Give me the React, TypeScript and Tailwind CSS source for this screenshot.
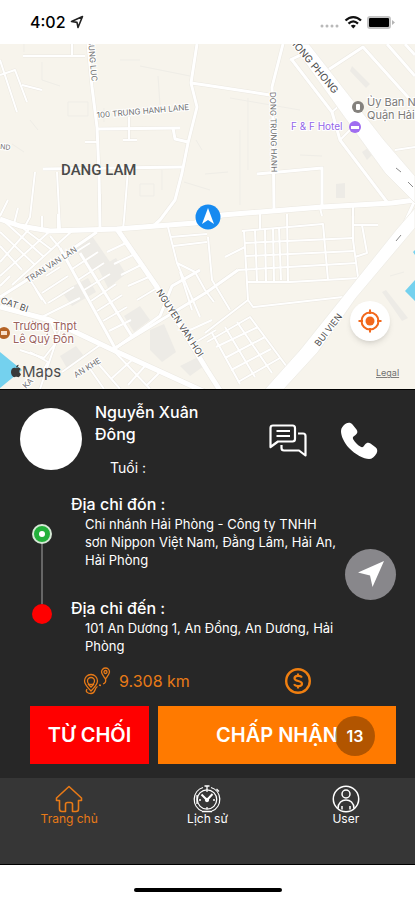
import { useState } from 'react'

const majorRoads = [
    'M0 219 L20 226 L50 231 L117 229 L195 223 L222 215 L322 207 L392 203 L415 200',
    'M117 229 L157 287 L207 370 L221 392',
    'M0 307 L50 320 L113 350 L205 392',
]

const roads = [
    'M88 44 L92 87 L97 127 L99 173 L100 229',
    'M197 44 L191 83 L197 107 L188 143 L182 173 L175 200 L160 220 L152 227',
    'M191 83 L205 85 L270 95',
    'M283 44 L272 87 L273 123 L274 210',
    'M292 60 L332 112 L340 140 L387 202',
    'M97 129 L180 128',
    'M173 128 L175 139 L188 142',
    'M43 169 L182 167',
    'M257 174 L322 168 L322 207',
    'M290 60 L305 53',
    'M328 70 L363 47 L415 105',
    'M387 44 L415 76',
    'M405 44 L415 55',
    'M415 200 L405 222',
    'M0 297 L27 280 L97 232',
    'M60 248 L115 348',
    'M80 253 L133 338',
    'M113 350 L160 316 L172 286 L200 270',
    'M115 348 L207 292 L238 270',
]

const lanes = [
    'M23 56 L85 56 M72 44 L72 56',
    'M0 60 L17 112 M0 75 L15 70 L27 102 M22 85 L42 90',
    'M129 117 L129 140 M123 140 L137 140 M85 142 L97 142',
    'M35 172 L30 217 L24 228 M57 172 L60 229 M128 170 L124 220 L123 229',
    'M0 216 L8 200 M14 224 L18 208 M42 229 L42 216',
    'M332 112 L340 105 M340 140 L350 130 M395 150 L415 147',
    'M353 205 L353 240 L358 277 M353 225 L378 225 M362 225 L367 253 L355 257',
    'M242 231 L323 224 L328 280 M244 231 L248 300 L253 307 L343 297',
    'M255 230 L257 281 M265 229 L266 281 M273 228 L274 281 M279 228 L281 280 M287 214 L288 282 M260 212 L260 229',
    'M245 243 L354 238 M246 256 L355 251 M238 270 L357 263 M247 282 L290 282 L360 278',
    'M225 257 L245 247 M208 237 L212 280 L230 310',
    'M205 333 L248 300 M207 342 L250 317 L287 367',
    'M212 333 L240 384 M225 327 L255 377 M237 322 L272 373',
    'M216 347 L258 327 M225 358 L265 337 M231 370 L271 349 M238 382 L280 358',
    'M168 227 L177 263 L200 317 M170 237 L207 234 M173 246 L207 242 M177 263 L195 272 L205 290 L214 302',
    'M180 272 L192 310 M190 330 L212 320 M196 342 L216 330',
    'M107 252 L128 242 M114 264 L135 254 M121 275 L143 264 M128 286 L151 276 M137 300 L157 288',
    'M66 258 L90 243 M72 269 L98 252 M78 280 L104 263 M84 290 L110 274 M91 301 L116 284 M97 311 L122 295 M103 321 L127 307 M109 331 L131 320',
    'M60 267 L46 276 M68 276 L42 293 M74 287 L48 303 M80 298 L40 318 M60 248 L50 236 M35 288 L42 300 M28 277 L46 304',
    'M0 246 L22 270 M0 232 L34 264 M5 222 L44 257 M20 226 L52 250 M0 262 L30 228 M0 276 L50 231 M12 285 L72 231 M0 286 L10 276',
    'M50 320 L58 340 L44 358 L20 350 M60 330 L40 389 M100 345 L62 372 M95 360 L120 389 M88 366 L104 389 M113 350 L150 389 M132 360 L112 378 M145 366 L128 385 M160 372 L146 386',
    'M30 352 L48 362 L40 376',
    'M100 194 L100 229 M58 214 L58 229 M320 208 L322 216 M353 205 L353 216',
]

const faintPaths = 'M42 62 L42 80 L60 86 M68 102 h20 v14 h-20 z M140 66 L190 76 M158 76 L160 105 M140 184 h14 v12 h-14 z M30 120 L38 130 M12 144 L24 152 M248 98 L248 170 M205 174 L228 172 M300 155 L322 156 M196 140 L202 150 M230 98 L300 110 M104 108 L104 122 M162 170 L162 190 M184 182 L210 190 M240 130 L240 205 M24 44 L24 52 M120 60 L140 60 M390 276 L404 272'

const buildings = [
    'M74 246 L92 236 L110 262 L92 272 Z',
    'M98 268 L116 258 L126 274 L108 288 Z',
    'M62 292 L88 278 L96 292 L72 306 Z',
    'M124 316 L140 306 L150 320 L134 332 Z',
    'M150 330 L164 324 L176 352 L162 362 L150 350 Z',
    'M60 356 L76 346 L84 356 L68 370 Z',
    'M180 366 L196 358 L204 366 L190 376 Z',
    'M336 184 L345 183 L345 198 L336 198 Z',
    'M362 152 L368 148 L373 154 L367 160 Z',
    'M352 66 L370 84 L366 88 L350 71 Z',
    'M382 292 L386 290 L408 318 L402 321 Z',
]

const Label = ({ x, y, rotate = 0, size = 9, fill = '#707070', children }: {
    x: number
    y: number
    rotate?: number
    size?: number
    fill?: string
    children: string
}) => (
    <text
        transform={`translate(${x} ${y}) rotate(${rotate})`}
        fontSize={size}
        fill={fill}
        stroke="#ffffff"
        strokeWidth="2"
        paintOrder="stroke"
    >
        {children}
    </text>
)

const RideMap = () => (
    <svg
        viewBox="0 44 415 345"
        preserveAspectRatio="xMidYMid slice"
        className="block h-[345px] w-full font-['Inter','Liberation_Sans',sans-serif]"
    >
        <rect x="-400" y="44" width="1215" height="345" fill="#f7f4ec" />
        <g fill="#edebe6">
            {buildings.map((d) => <path key={d} d={d} />)}
        </g>
        <path d={faintPaths} fill="none" stroke="#efede7" strokeWidth="1" />
        <path d="M0 352 L22 370 L0 388 Z M415 280 L405 291 L415 301 Z M415 250 l-2 2 l2 3 z" fill="#74d1ee" />
        <g fill="none" stroke="#ebe8e1" strokeLinejoin="round">
            {lanes.map((d) => <path key={d} d={d} strokeWidth="3" />)}
            {roads.map((d) => <path key={d} d={d} strokeWidth="4" />)}
            {majorRoads.map((d) => <path key={d} d={d} strokeWidth="6" />)}
        </g>
        <g fill="none" stroke="#ffffff" strokeLinejoin="round">
            {lanes.map((d) => <path key={d} d={d} strokeWidth="2" />)}
            {roads.map((d) => <path key={d} d={d} strokeWidth="3" />)}
            {majorRoads.map((d) => <path key={d} d={d} strokeWidth="5" />)}
        </g>
        <path d="M292 44 L309 44 L384 140 L415 176 L415 203 L385 173 L345 118 Z" fill="#ffffff" stroke="#f0eee8" />
        <path d="M415 208 L396 230 L340 300 L300 350 L265 389 L284 389 L318 352 L356 298 L415 228 Z" fill="#ffffff" stroke="#f0eee8" />
        <path d="M396 168 l5 4 M408 182 l5 5 M396 241 l5 -6" stroke="#8a8a8a" />

        <Label x={88} y={40} rotate={85} size={8}>BUNG LUC</Label>
        <Label x={97} y={118} rotate={-5} size={8}>100 TRUNG HANH LANE</Label>
        <Label x={270} y={92} rotate={89} size={8}>DONG TRUNG HANH</Label>
        <Label x={289} y={41} rotate={50} size={10} fill="#4d4d4d">HONG PHONG</Label>
        <Label x={0} y={149} rotate={5} size={7}>ND</Label>
        <Label x={28} y={283} rotate={-33} size={8}>TRAN VAN LAN</Label>
        <Label x={0} y={303} rotate={19} fill="#4d4d4d">CAT BI</Label>
        <Label x={156} y={292} rotate={57} fill="#4d4d4d">NGUYEN VAN HOI</Label>
        <Label x={319} y={347} rotate={-52} fill="#4d4d4d">BUI VIEN</Label>
        <Label x={76} y={378} rotate={-32} size={8}>AN KHE</Label>
        <Label x={26} y={389} rotate={-45} size={8}>KA</Label>
        <text x="61" y="175" fontSize="15" fontWeight="500" fill="#4a4a4a" className="font-['Roboto','Liberation_Sans',sans-serif]">DANG LAM</text>

        <Label x={291} y={130} size={10} fill="#9366e8">F &amp; F Hotel</Label>
        <circle cx="355" cy="127" r="6" fill="#a06df0" />
        <path d="M351 126 h8 v3 h-8 z" fill="#ffffff" />
        <Label x={367} y={106} size={11} fill="#7c7a77">Ủy Ban Nhân Dân</Label>
        <Label x={367} y={119} size={11} fill="#7c7a77">Quận Hải An</Label>
        <circle cx="358" cy="107" r="6" fill="#84817d" />
        <rect x="356" y="104" width="4" height="6" rx="1" fill="#ffffff" />
        <Label x={13} y={330} size={11} fill="#9b625c">Trường Thpt</Label>
        <Label x={13} y={343} size={11} fill="#9b625c">Lê Quý Đôn</Label>
        <circle cx="4" cy="333" r="6" fill="#b46325" />
        <path d="M1 331 h6 v4 h-6 z" fill="#f8dfc9" />

        <g transform="translate(11 365)" fill="#3a3a3a">
            <path d="M5 3.2 C7 1.9 9 2.7 9.7 4 C7.7 5.2 8 8 10 9 C9 11.6 7.8 12.5 6.6 12 C5.6 11.5 5 11.5 4 12 C2 12.8 0 9.6 0 7 C0 3.5 2.7 1.9 5 3.2 Z" />
            <path d="M5 2.6 C5 1 6.2 0 7.6 -.2 C7.6 1.4 6.6 2.6 5 2.6 Z" />
        </g>
        <text x="22" y="377" fontSize="15" fill="#4c4c4c">Maps</text>
        <text x="376" y="376" fontSize="9" fill="#707070" textDecoration="underline">Legal</text>

        <circle cx="208" cy="217" r="12.5" fill="#168af0" />
        <path d="M208 208 L214 224 L208 220 L202 224 Z" fill="#ffffff" />
    </svg>
)

const StatusBar = () => (
    <header className="flex h-11 items-center justify-between bg-white pl-[30px] pr-5 text-black">
        <div className="flex items-center gap-1">
            <span className="text-base font-medium">4:02</span>
            <svg viewBox="0 0 14 14" className="size-3.5">
                <path d="M1.5 6.5 L12.5 1.5 L8 12.5 L7 7.4 Z" fill="none" stroke="#222" strokeWidth="1.6" strokeLinejoin="round" />
            </svg>
        </div>
        <svg viewBox="0 0 76 16" className="h-4 w-[76px]">
            <g fill="#b9b9b9">
                <circle cx="3" cy="12" r="1.5" />
                <circle cx="8" cy="12" r="1.5" />
                <circle cx="13" cy="12" r="1.5" />
                <circle cx="18" cy="12" r="1.5" />
            </g>
            <g fill="none" stroke="#111" strokeWidth="2.2">
                <path d="M26.5 6.6 C31 2 37.5 2 42 6.6" />
                <path d="M29.5 9.6 C32.5 6.8 36 6.8 39 9.6" />
            </g>
            <path d="M31.8 11.8 C33.4 10.4 35.2 10.4 36.8 11.8 L34.3 14.4 Z" fill="#111" />
            <rect x="49" y="3" width="22" height="11" rx="2" fill="#fff" stroke="#c4c4c4" strokeWidth="2" />
            <rect x="50" y="4" width="20" height="9" rx="1" fill="#000" />
            <path d="M73 6 L76 8.5 L73 11 Z" fill="#b5b5b5" />
        </svg>
    </header>
)

const ChatIcon = () => (
    <svg viewBox="0 0 38 34" className="h-[34px] w-[38px]" fill="none" stroke="#fff" strokeWidth="2.2" strokeLinejoin="round">
        <path d="M4 1.5 H23.5 Q26 1.5 26 4 V15 Q26 17.5 23.5 17.5 H9 L1.5 23 V4 Q1.5 1.5 4 1.5 Z" />
        <path d="M29 9.5 H34 Q36.5 9.5 36.5 12 V31.5 L30 26.5 H15 Q12.5 26.5 12.5 24 V21" />
        <path d="M7.5 7 H21 M7.5 12 H21" />
    </svg>
)

const PhoneIcon = () => (
    <svg viewBox="0 0 38 38" className="size-[38px]" fill="#fff">
        <path d="M1 9 C1 6 3 3.500 6 1.5 C8.500 0 11 .5 12.500 2.500 L16.500 7.500 C18 9.500 17.500 11.500 15.500 13 L13.500 14.500 C12.500 15.500 12.800 16.500 13.500 17.800 C15.200 20.600 17.500 23 20.300 24.600 C21.500 25.300 22.500 25.500 23.500 24.500 L25 22.500 C26.500 20.500 28.500 20 30.500 21.500 L35.500 25.300 C37.500 27 37.800 29 36.500 31.500 C34.500 35 32 37 29 37 C24 37 15 32.500 9 26 C4 20.500 1 14 1 9 Z" />
    </svg>
)

const RouteIcon = () => (
    <svg viewBox="0 0 28 28" className="size-7" fill="none" stroke="#e87a17" strokeWidth="1.3">
        <path d="M8 24 C4 20 1.5 17 1.5 14 A6.5 6.5 0 0 1 14.5 14 C14.5 17 12 20 8 24 Z" />
        <circle cx="8" cy="14" r="3.5" />
        <path d="M5 17 L8 20 L11 17" />
        <path d="M22.5 12 C20 8.5 18.5 7 18.5 5 A4 4 0 0 1 26.5 5 C26.5 7 25 8.5 22.5 12 Z" />
        <circle cx="22.5" cy="5" r="1.5" />
        <path d="M4 22 C2 25 5 26.5 8 26.5 C13 26.5 11 21 14.5 19.5 M16 18 L18 18.5 M20 17 C23 16 23 14 22.5 12" />
    </svg>
)

const DollarIcon = () => (
    <svg viewBox="0 0 28 28" className="size-7" fill="none" stroke="#f07f10">
        <circle cx="14" cy="14" r="11.8" strokeWidth="2.4" />
        <path d="M18 10.5 C16.5 8.3 10.5 8.3 10.5 11.3 C10.5 15 18 13 18 16.7 C18 19.8 11.5 19.8 10 17.3 M14 6.5 V9 M14 19 V21.5" strokeWidth="2.2" />
    </svg>
)

const HomeIcon = () => (
    <svg viewBox="0 0 28 28" className="size-7" fill="none" stroke="currentColor" strokeWidth="1.6" strokeLinejoin="round">
        <path d="M14 1.5 L1.5 13 V15.5 H4.5 V24 Q4.5 26.5 7 26.5 H10.5 V19.5 Q10.5 17.5 12.5 17.5 H15.5 Q17.5 17.5 17.5 19.5 V26.5 H21 Q23.5 26.5 23.5 24 V15.5 H26.5 V13 Z" />
    </svg>
)

const HistoryIcon = () => (
    <svg viewBox="0 0 28 28" className="size-7" fill="none" stroke="currentColor" strokeWidth="1.3">
        <circle cx="14" cy="14.5" r="9.7" />
        <path d="M10 2.5 A12.5 12.5 0 0 0 9 26 M18 2.5 A12.5 12.5 0 0 1 19 26 M11.5 1 H16.5 M14 1 V7 M4 10 V19 M23.5 4 L26 6.5" />
        <path d="M8.5 9.5 L14 15 L19.5 9" strokeWidth="2" />
        <path d="M14 22 V24 M6 15 H8 M20 15 H22 M9 26.5 H19" />
        <circle cx="14" cy="15" r="1.5" fill="currentColor" />
    </svg>
)

const UserIcon = () => (
    <svg viewBox="0 0 28 28" className="size-7" fill="none" stroke="currentColor" strokeWidth="1.5">
        <circle cx="14" cy="14" r="12.7" />
        <circle cx="14" cy="9" r="4" />
        <path d="M6 23.5 C6 12 22 12 22 23.5 M10 24.5 V21 M18 24.5 V21" />
    </svg>
)

const tabs = [
    { name: 'Trang chủ', Icon: HomeIcon },
    { name: 'Lịch sử', Icon: HistoryIcon },
    { name: 'User', Icon: UserIcon },
]

export default function App() {
    const [activeTab, setActiveTab] = useState('Trang chủ')

    return (
        <div className="min-h-screen w-full bg-white font-['Inter','Liberation_Sans',sans-serif]">
            <StatusBar />
            <div className="relative">
                <RideMap />
                <button aria-label="Vị trí của tôi" className="absolute right-[25px] bottom-12 flex size-10 items-center justify-center rounded-full bg-white shadow-md">
                    <svg viewBox="0 0 24 24" className="size-6" fill="none" stroke="#f2681c" strokeWidth="2">
                        <circle cx="12" cy="12" r="8.5" />
                        <circle cx="12" cy="12" r="4.5" fill="#f2681c" stroke="none" />
                        <path d="M12 .5 V5 M12 19 V23.5 M.5 12 H5 M19 12 H23.5" />
                    </svg>
                </button>
            </div>

            <main className="border-t border-black bg-[#272727] text-white">
                <section className="flex h-[103px] items-start pr-[37px] pl-5">
                    <div className="mt-[18px] size-[62px] shrink-0 rounded-full bg-white" />
                    <div className="mt-[11px] ml-[13px] w-[130px]">
                        <h1 className="text-base leading-[22px] font-medium">Nguyễn Xuân Đông</h1>
                        <p className="mt-3 ml-[15px] text-sm leading-[22px]">Tuổi :</p>
                    </div>
                    <div className="mt-8 ml-auto flex items-center gap-[33px]">
                        <button aria-label="Nhắn tin"><ChatIcon /></button>
                        <button aria-label="Gọi điện"><PhoneIcon /></button>
                    </div>
                </section>

                <section className="flex items-center pr-[19px] pl-8">
                    <div className="flex flex-col items-center self-start pt-[31px]">
                        <div className="flex size-5 items-center justify-center rounded-full border-2 border-[#d5e8d5] bg-[#22b03a]">
                            <div className="size-1.5 rounded-full bg-white" />
                        </div>
                        <div className="h-[60px] w-0.5 bg-[#666666]" />
                        <div className="size-5 rounded-full bg-[#ff0000]" />
                    </div>
                    <div className="ml-[19px] w-[270px]">
                        <h2 className="text-base leading-[22px] font-medium">Địa chỉ đón :</h2>
                        <p className="pl-3.5 text-[13px] leading-[18px]">
                            Chi nhánh Hải Phòng - Công ty TNHH sơn Nippon Việt Nam, Đằng Lâm, Hải An, Hải Phòng
                        </p>
                        <h2 className="mt-7 text-base leading-[22px] font-medium">Địa chỉ đến :</h2>
                        <p className="pl-3.5 text-[13px] leading-[18px]">
                            101 An Dương 1, An Đồng, An Dương, Hải Phòng
                        </p>
                    </div>
                    <button aria-label="Chỉ đường" className="ml-auto flex size-[51px] shrink-0 items-center justify-center rounded-full bg-[#88878b]">
                        <svg viewBox="0 0 28 28" className="size-7">
                            <path d="M27 1 L15.5 27 L13 15.5 L1 12.5 Z" fill="#fff" />
                        </svg>
                    </button>
                </section>

                <section className="flex h-10 items-end pr-[103px] pl-[83px] text-[#e87a17]">
                    <RouteIcon />
                    <span className="ml-2 text-base leading-7">9.308 km</span>
                    <div className="ml-auto"><DollarIcon /></div>
                </section>

                <section className="flex gap-[9px] pt-[11px] pr-[19px] pb-3.5 pl-[30px] text-xl font-semibold">
                    <button className="h-[58px] flex-1 bg-[#ff0000]">TỪ CHỐI</button>
                    <button className="relative h-[58px] flex-2 bg-[#ff7a00]">
                        CHẤP NHẬN
                        <span className="absolute top-[10px] right-[21px] flex size-10 items-center justify-center rounded-full bg-black/30 text-base">13</span>
                    </button>
                </section>
            </main>

            <nav className="grid h-[87px] grid-cols-3 items-start border-b border-black bg-[#363636] pt-[7px]">
                {tabs.map(({ name, Icon }) => (
                    <button
                        key={name}
                        onClick={() => setActiveTab(name)}
                        className={`flex flex-col items-center text-xs leading-3 ${activeTab === name ? 'text-[#e87a17]' : 'text-white'}`}
                    >
                        <Icon />
                        {name}
                    </button>
                ))}
            </nav>
            <div className="flex justify-center pt-[23px] pb-2">
                <div className="h-1 w-[148px] rounded-full bg-black" />
            </div>
        </div>
    )
}
